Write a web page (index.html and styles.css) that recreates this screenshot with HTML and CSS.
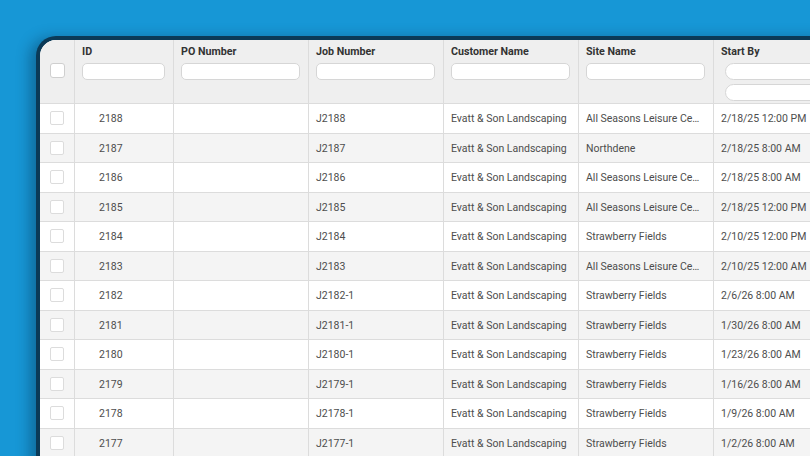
FILE: index.html
```html
<!DOCTYPE html>
<html>
<head>
<meta charset="utf-8">
<link rel="stylesheet" href="styles.css">
</head>
<body>
<div class="frame">
  <div class="grid">
    <div class="row head">
      <div class="cell chk"><span class="box hbox"></span></div>
      <div class="cell hcell"><span class="htitle">ID</span><span class="filter"></span></div>
      <div class="cell hcell"><span class="htitle">PO Number</span><span class="filter"></span></div>
      <div class="cell hcell"><span class="htitle">Job Number</span><span class="filter"></span></div>
      <div class="cell hcell"><span class="htitle">Customer Name</span><span class="filter"></span></div>
      <div class="cell hcell"><span class="htitle">Site Name</span><span class="filter"></span></div>
      <div class="cell hcell"><span class="htitle">Start By</span><span class="filter pill"></span><span class="filter pill"></span></div>
    </div>
    <div class="row"><div class="cell chk"><span class="box"></span></div><div class="cell id">2188</div><div class="cell"></div><div class="cell">J2188</div><div class="cell">Evatt &amp; Son Landscaping</div><div class="cell">All Seasons Leisure Centre</div><div class="cell">2/18/25 12:00 PM</div></div>
    <div class="row alt"><div class="cell chk"><span class="box"></span></div><div class="cell id">2187</div><div class="cell"></div><div class="cell">J2187</div><div class="cell">Evatt &amp; Son Landscaping</div><div class="cell">Northdene</div><div class="cell">2/18/25 8:00 AM</div></div>
    <div class="row"><div class="cell chk"><span class="box"></span></div><div class="cell id">2186</div><div class="cell"></div><div class="cell">J2186</div><div class="cell">Evatt &amp; Son Landscaping</div><div class="cell">All Seasons Leisure Centre</div><div class="cell">2/18/25 8:00 AM</div></div>
    <div class="row alt"><div class="cell chk"><span class="box"></span></div><div class="cell id">2185</div><div class="cell"></div><div class="cell">J2185</div><div class="cell">Evatt &amp; Son Landscaping</div><div class="cell">All Seasons Leisure Centre</div><div class="cell">2/18/25 12:00 PM</div></div>
    <div class="row"><div class="cell chk"><span class="box"></span></div><div class="cell id">2184</div><div class="cell"></div><div class="cell">J2184</div><div class="cell">Evatt &amp; Son Landscaping</div><div class="cell">Strawberry Fields</div><div class="cell">2/10/25 12:00 PM</div></div>
    <div class="row alt"><div class="cell chk"><span class="box"></span></div><div class="cell id">2183</div><div class="cell"></div><div class="cell">J2183</div><div class="cell">Evatt &amp; Son Landscaping</div><div class="cell">All Seasons Leisure Centre</div><div class="cell">2/10/25 12:00 AM</div></div>
    <div class="row"><div class="cell chk"><span class="box"></span></div><div class="cell id">2182</div><div class="cell"></div><div class="cell">J2182-1</div><div class="cell">Evatt &amp; Son Landscaping</div><div class="cell">Strawberry Fields</div><div class="cell">2/6/26 8:00 AM</div></div>
    <div class="row alt"><div class="cell chk"><span class="box"></span></div><div class="cell id">2181</div><div class="cell"></div><div class="cell">J2181-1</div><div class="cell">Evatt &amp; Son Landscaping</div><div class="cell">Strawberry Fields</div><div class="cell">1/30/26 8:00 AM</div></div>
    <div class="row"><div class="cell chk"><span class="box"></span></div><div class="cell id">2180</div><div class="cell"></div><div class="cell">J2180-1</div><div class="cell">Evatt &amp; Son Landscaping</div><div class="cell">Strawberry Fields</div><div class="cell">1/23/26 8:00 AM</div></div>
    <div class="row alt"><div class="cell chk"><span class="box"></span></div><div class="cell id">2179</div><div class="cell"></div><div class="cell">J2179-1</div><div class="cell">Evatt &amp; Son Landscaping</div><div class="cell">Strawberry Fields</div><div class="cell">1/16/26 8:00 AM</div></div>
    <div class="row"><div class="cell chk"><span class="box"></span></div><div class="cell id">2178</div><div class="cell"></div><div class="cell">J2178-1</div><div class="cell">Evatt &amp; Son Landscaping</div><div class="cell">Strawberry Fields</div><div class="cell">1/9/26 8:00 AM</div></div>
    <div class="row alt"><div class="cell chk"><span class="box"></span></div><div class="cell id">2177</div><div class="cell"></div><div class="cell">J2177-1</div><div class="cell">Evatt &amp; Son Landscaping</div><div class="cell">Strawberry Fields</div><div class="cell">1/2/26 8:00 AM</div></div>
  </div>
</div>
</body>
</html>
```
FILE: styles.css
```css
html, body {
  margin: 0;
  padding: 0;
  height: 100%;
}
body {
  background: #1797d6;
  overflow: hidden;
  font-family: Roboto, "Liberation Sans", sans-serif;
}
.frame {
  margin: 36px 0 0 36px;
  width: 900px;
  height: 480px;
  border-top: 4px solid #0b3a57;
  border-left: 4px solid #0b3a57;
  border-top-left-radius: 20px;
  background: #fff;
  overflow: hidden;
  box-shadow: -6px 2px 14px rgba(0, 25, 50, 0.35);
}
.grid {
  display: flex;
  flex-direction: column;
}
.row {
  display: grid;
  grid-template-columns: 35px 99px 135px 135px 135px 135px 230px;
  height: 29.5px;
  box-sizing: border-box;
  border-bottom: 1px solid #dcdcdc;
  background: #fff;
}
.row.alt {
  background: #f4f4f4;
}
.row.head {
  height: 64px;
  background: #efefef;
}
.cell {
  box-sizing: border-box;
  border-right: 1px solid #dcdcdc;
  padding: 0 8px 0 7px;
  font-size: 10.5px;
  color: #4d4d4d;
  display: flex;
  align-items: center;
  white-space: nowrap;
  overflow: hidden;
  min-width: 0;
}
.cell:not(.chk):not(.hcell) {
  display: block;
  line-height: 28.5px;
  padding-top: 1px;
  text-overflow: ellipsis;
}
.cell.id {
  padding-left: 24px;
}
.chk {
  justify-content: center;
  padding: 0;
}
.box {
  width: 12px;
  height: 12px;
  border: 1px solid #dcdcdc;
  border-radius: 2px;
  background: #fff;
}
.head .chk {
  align-items: flex-start;
  padding-top: 23px;
}
.hbox {
  width: 13px;
  height: 13px;
  border-color: #cfcfcf;
  border-radius: 3px;
  margin-left: 1px;
}
.hcell {
  flex-direction: column;
  align-items: stretch;
  justify-content: flex-start;
  padding-top: 5px;
}
.htitle {
  font-weight: 700;
  color: #333;
  font-size: 10.7px;
  line-height: 14px;
}
.filter {
  display: block;
  height: 17px;
  box-sizing: border-box;
  margin-top: 4px;
  border: 1px solid #d6d6d6;
  border-radius: 5px;
  background: #fff;
}
.filter.pill {
  margin-left: 4px;
  margin-right: -20px;
  border-radius: 9px;
}
.filter.pill + .filter.pill {
  margin-top: 4px;
}
```
